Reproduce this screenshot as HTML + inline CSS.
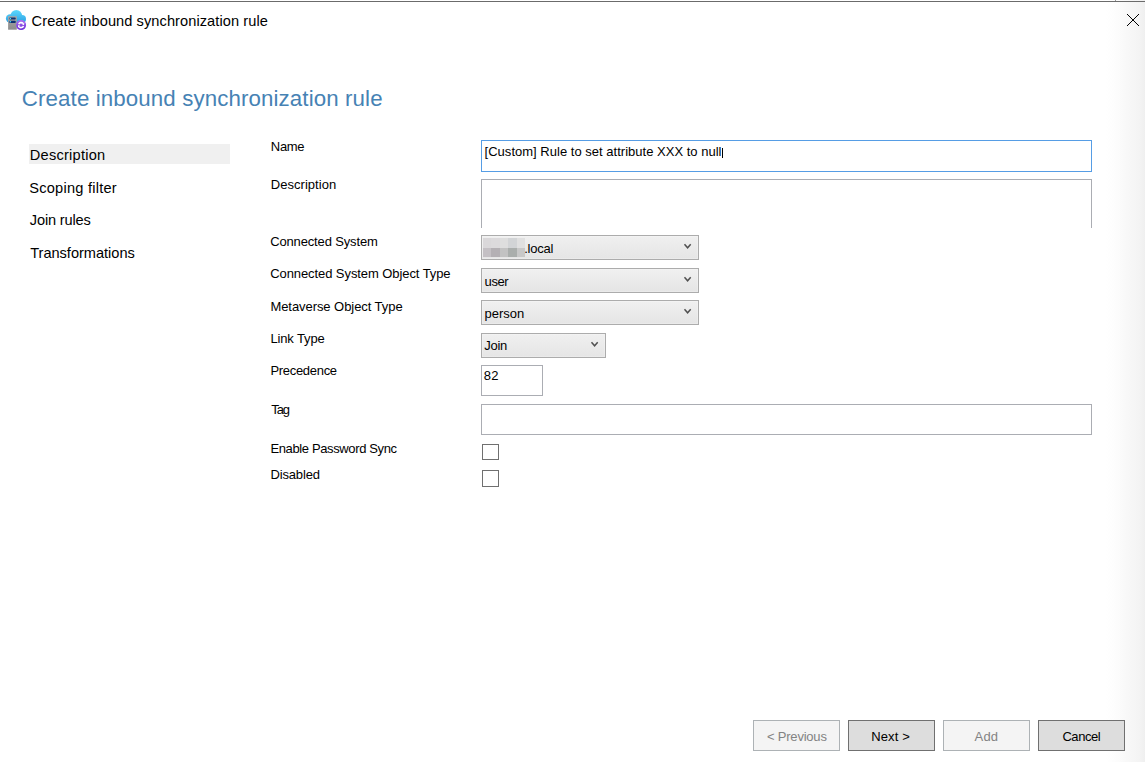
<!DOCTYPE html>
<html lang="en">
<head>
<meta charset="utf-8">
<title>Create inbound synchronization rule</title>
<style>
html,body{margin:0;padding:0}
body{width:1145px;height:762px;position:relative;overflow:hidden;
 background:linear-gradient(to right,#fff 0,#fff 1106px,#fdfdfd 1114px,#fbfbfb 1120px,#f8f8f8 1127px,#f6f6f6 1133px,#f4f4f4 1139px,#f0f0f0 1144px,#efefef 1145px);
 font-family:"Liberation Sans",sans-serif}
.abs,.t,.combo,.btn,.box,.chev{position:absolute;box-sizing:border-box}
.t{white-space:nowrap;display:block;margin:0;font-weight:normal}
.topline{left:0;top:1px;width:1145px;height:1px;background:#6b6b6b}
.hl{left:29px;top:144px;width:201px;height:20px;background:#f0f0f0}
.box{background:#fff;border:1px solid #abadb3}
.box.focus{border-color:#569de5}
.combo{border:1px solid #acacac;background:linear-gradient(to bottom,#f0f0f0,#e5e5e5);box-shadow:inset 0 0 0 1px rgba(255,255,255,.22)}
.btn{border:1px solid #707070;background:#ddd}
.btn.dis{border-color:#adb2b5;background:#f4f4f4}
.chk{background:#fff;border:1px solid #707070}
.caret{left:722px;top:148px;width:1px;height:10px;background:#000}
</style>
</head>
<body>
<div class="abs topline"></div>
<div class="abs" style="left:1115px;top:0;width:1px;height:1px;background:#9a9a9a"></div>
<header>
<svg class="abs" id="icon" style="left:4px;top:8px" width="26" height="24" viewBox="0 0 26 24">
<defs>
<linearGradient id="cg" gradientUnits="userSpaceOnUse" x1="0" y1="2" x2="0" y2="15"><stop offset="0" stop-color="#5cd9fc"/><stop offset="1" stop-color="#2b9fe4"/></linearGradient>
<linearGradient id="sg" x1="0" y1="0" x2="0" y2="1"><stop offset="0" stop-color="#a8a8a8"/><stop offset="1" stop-color="#8c8c8c"/></linearGradient>
<linearGradient id="pg" x1="0" y1="0" x2="0" y2="1"><stop offset="0" stop-color="#ad6ff0"/><stop offset="1" stop-color="#6a2bd9"/></linearGradient>
</defs>
<g fill="url(#cg)">
<circle cx="6.1" cy="10.5" r="4.2"/>
<circle cx="12.3" cy="7.8" r="5.9"/>
<circle cx="18" cy="10.9" r="4"/>
<rect x="6" y="8" width="12" height="6.9"/>
</g>
<rect x="4.1" y="8.2" width="8.7" height="13.5" fill="url(#sg)"/>
<rect x="5.2" y="9.4" width="6.6" height="2.1" rx="1" fill="#0d3273"/>
<rect x="5.2" y="12.8" width="6.6" height="2.1" rx="1" fill="#0d3273"/>
<circle cx="6.4" cy="10.45" r="0.75" fill="#45e3ff"/>
<circle cx="6.4" cy="13.85" r="0.75" fill="#45e3ff"/>
<circle cx="17.1" cy="17.1" r="5" fill="url(#pg)"/>
<path d="M14.75 16.25 A2.5 2.5 0 0 1 19.02 15.49 M19.45 17.95 A2.5 2.5 0 0 1 15.18 18.71" fill="none" stroke="#fff" stroke-width="1.6"/>
<path d="M18.02 16.33 L20.3 14.4 L20 17.2 Z M16.18 17.87 L13.9 19.8 L14.2 17 Z" fill="#fff"/>
</svg>
<div id="t_title" class="t" style="left:31.60px;top:10.84px;font-size:14.6px;line-height:20px;color:#000;letter-spacing:0.076px;">Create inbound synchronization rule</div>
<svg class="abs" id="closex" style="left:1126px;top:13px" width="14" height="14" viewBox="0 0 14 14"><path d="M1 1 L13 13 M13 1 L1 13" stroke="#000" stroke-width="1" fill="none"/></svg>
</header>
<h1 id="t_head" class="t" style="left:21.80px;top:82.67px;font-size:22.3px;line-height:31px;color:#4682b4;letter-spacing:0.112px;">Create inbound synchronization rule</h1>
<nav>
<div class="abs hl" id="hl"></div>
<div id="s_desc" class="t" style="left:29.80px;top:144.54px;font-size:14.6px;line-height:20px;color:#000;letter-spacing:0.240px;">Description</div>
<div id="s_scop" class="t" style="left:29.20px;top:177.54px;font-size:14.6px;line-height:20px;color:#000;letter-spacing:0.238px;">Scoping filter</div>
<div id="s_join" class="t" style="left:29.80px;top:209.54px;font-size:14.6px;line-height:20px;color:#000;letter-spacing:-0.156px;">Join rules</div>
<div id="s_tran" class="t" style="left:30.20px;top:243.44px;font-size:14.6px;line-height:20px;color:#000;letter-spacing:-0.021px;">Transformations</div>
</nav>
<main>
<div class="row">
<label id="l_name" class="t" style="left:270.80px;top:138.20px;font-size:13px;line-height:18px;color:#000;letter-spacing:-0.300px;">Name</label>
<div id="i_name" class="box focus" style="left:481px;top:140px;width:611px;height:32px"></div>
<span id="v_name" class="t" style="left:484.60px;top:142.70px;font-size:13px;line-height:18px;color:#000;letter-spacing:0.015px;">[Custom] Rule to set attribute XXX to null</span>
<div class="abs caret"></div>
</div>
<div class="row">
<label id="l_desc" class="t" style="left:270.80px;top:176.30px;font-size:13px;line-height:18px;color:#000;letter-spacing:0.030px;">Description</label>
<div id="i_desc" class="box" style="left:481px;top:179px;width:611px;height:49px;border-bottom:none"></div>
</div>
<div class="row">
<label id="l_cs" class="t" style="left:270.20px;top:233.40px;font-size:13px;line-height:18px;color:#000;letter-spacing:-0.147px;">Connected System</label>
<div id="c_cs" class="combo" style="left:481px;top:235px;width:218px;height:25px"></div><svg class="chev" style="left:683px;top:242px" width="10" height="8" viewBox="0 0 10 8"><path d="M1.5 2.3 L4.6 5.8 L7.7 2.3" fill="none" stroke="#505050" stroke-width="1.5"/></svg>
<i class="abs" style="left:483px;top:238px;width:8px;height:10px;background:#dad8da"></i><i class="abs" style="left:491px;top:238px;width:9px;height:10px;background:#dcdadc"></i><i class="abs" style="left:500px;top:238px;width:8px;height:10px;background:#dedede"></i><i class="abs" style="left:508px;top:238px;width:9px;height:10px;background:#d2d4d6"></i><i class="abs" style="left:517px;top:238px;width:8px;height:10px;background:#e0e0e0"></i><i class="abs" style="left:483px;top:248px;width:8px;height:9px;background:#c4c0c4"></i><i class="abs" style="left:491px;top:248px;width:9px;height:9px;background:#b4b0b4"></i><i class="abs" style="left:500px;top:248px;width:8px;height:9px;background:#c2c2c2"></i><i class="abs" style="left:508px;top:248px;width:9px;height:9px;background:#aaaeac"></i><i class="abs" style="left:517px;top:248px;width:8px;height:9px;background:#c8c8c8"></i>
<span id="v_local" class="t" style="left:524.20px;top:239.50px;font-size:13px;line-height:18px;color:#000;letter-spacing:-0.240px;">.local</span>
</div>
<div class="row">
<label id="l_csot" class="t" style="left:270.20px;top:265.30px;font-size:13px;line-height:18px;color:#000;letter-spacing:-0.081px;">Connected System Object Type</label>
<div id="c_csot" class="combo" style="left:481px;top:268px;width:218px;height:25px"></div><svg class="chev" style="left:683px;top:275px" width="10" height="8" viewBox="0 0 10 8"><path d="M1.5 2.3 L4.6 5.8 L7.7 2.3" fill="none" stroke="#505050" stroke-width="1.5"/></svg>
<span id="v_user" class="t" style="left:484.60px;top:272.50px;font-size:13px;line-height:18px;color:#000;letter-spacing:-0.433px;">user</span>
</div>
<div class="row">
<label id="l_mot" class="t" style="left:270.40px;top:297.50px;font-size:13px;line-height:18px;color:#000;letter-spacing:-0.060px;">Metaverse Object Type</label>
<div id="c_mot" class="combo" style="left:481px;top:300px;width:218px;height:25px"></div><svg class="chev" style="left:683px;top:307px" width="10" height="8" viewBox="0 0 10 8"><path d="M1.5 2.3 L4.6 5.8 L7.7 2.3" fill="none" stroke="#505050" stroke-width="1.5"/></svg>
<span id="v_person" class="t" style="left:484.60px;top:305.40px;font-size:13px;line-height:18px;color:#000;letter-spacing:-0.040px;">person</span>
</div>
<div class="row">
<label id="l_lt" class="t" style="left:270.40px;top:330.40px;font-size:13px;line-height:18px;color:#000;letter-spacing:-0.137px;">Link Type</label>
<div id="c_lt" class="combo" style="left:481px;top:333px;width:125px;height:25px"></div><svg class="chev" style="left:590px;top:340px" width="10" height="8" viewBox="0 0 10 8"><path d="M1.5 2.3 L4.6 5.8 L7.7 2.3" fill="none" stroke="#505050" stroke-width="1.5"/></svg>
<span id="v_join" class="t" style="left:484.20px;top:336.70px;font-size:13px;line-height:18px;color:#000;letter-spacing:-0.267px;">Join</span>
</div>
<div class="row">
<label id="l_prec" class="t" style="left:270.40px;top:362.40px;font-size:13px;line-height:18px;color:#000;letter-spacing:-0.300px;">Precedence</label>
<div id="i_prec" class="box" style="left:481px;top:365px;width:62px;height:31px"></div>
<span id="v_82" class="t" style="left:483.80px;top:366.50px;font-size:13px;line-height:18px;color:#000;letter-spacing:0.300px;">82</span>
</div>
<div class="row">
<label id="l_tag" class="t" style="left:271.20px;top:401.40px;font-size:13px;line-height:18px;color:#000;letter-spacing:-1.050px;">Tag</label>
<div id="i_tag" class="box" style="left:481px;top:404px;width:611px;height:31px"></div>
</div>
<div class="row">
<label id="l_eps" class="t" style="left:270.40px;top:440.40px;font-size:13px;line-height:18px;color:#000;letter-spacing:-0.368px;">Enable Password Sync</label>
<div id="k_eps" class="abs chk" style="left:482px;top:444px;width:17px;height:16px"></div>
</div>
<div class="row">
<label id="l_dis" class="t" style="left:270.40px;top:466.10px;font-size:13px;line-height:18px;color:#000;letter-spacing:-0.143px;">Disabled</label>
<div id="k_dis" class="abs chk" style="left:482px;top:470px;width:17px;height:17px"></div>
</div>
</main>
<footer>
<div id="btn_prev" class="btn dis" style="left:753px;top:720px;width:87px;height:31px"></div><span id="b_prev" class="t" style="left:767.00px;top:727.60px;font-size:13px;line-height:18px;color:#838383;letter-spacing:-0.211px;">&lt; Previous</span>
<div id="btn_next" class="btn" style="left:848px;top:720px;width:87px;height:31px"></div><span id="b_next" class="t" style="left:871.20px;top:727.60px;font-size:13px;line-height:18px;color:#000;letter-spacing:0.140px;">Next &gt;</span>
<div id="btn_add" class="btn dis" style="left:943px;top:720px;width:87px;height:31px"></div><span id="b_add" class="t" style="left:974.60px;top:727.60px;font-size:13px;line-height:18px;color:#838383;letter-spacing:0.150px;">Add</span>
<div id="btn_cancel" class="btn" style="left:1038px;top:720px;width:87px;height:31px"></div><span id="b_cancel" class="t" style="left:1062.40px;top:727.60px;font-size:13px;line-height:18px;color:#000;letter-spacing:-0.440px;">Cancel</span>
</footer>
</body>
</html>
